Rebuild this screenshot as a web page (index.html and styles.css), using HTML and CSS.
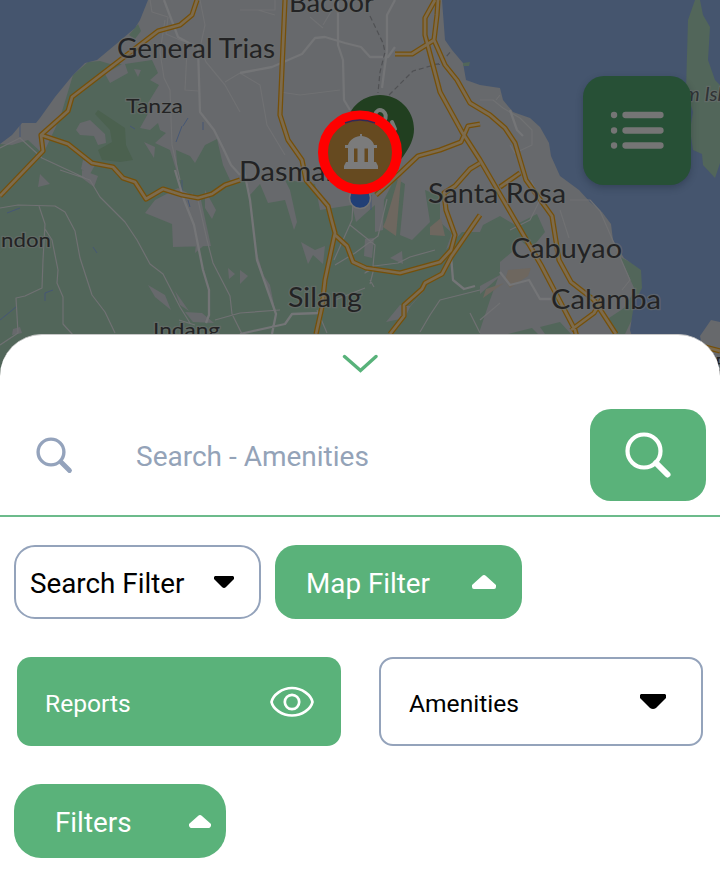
FILE: index.html
```html
<!DOCTYPE html>
<html lang="en">
<head>
<meta charset="utf-8">
<meta name="viewport" content="width=device-width, initial-scale=1">
<title>Map search</title>
<link rel="stylesheet" href="styles.css">
</head>
<body>
<main class="screen">
  <section class="map">
    <svg class="map-art" viewBox="0 0 720 390" width="720" height="390">
      <rect class="urban" width="720" height="390"/>
      <!-- countryside -->
      <path class="green" d="M88 62L100 61 110 64 122 64 105 74 110 83 128 73 125 64 152 60 158 73 150 80 159 85 148 103 150 110 140 128 150 130 158 123 160 130 166 133 155 143 170 150 178 176 176 150 190 156 195 163 205 145 217 139 223 165 230 180 247 180 250 195 260 184 268 203 285 200 294 230 297 222 290 190 285 180 302 182 315 184 320 210 352 205 356 222 375 205 375 232 383 230 384 200 395 178 405 184 400 235 412 240 430 222 425 190 440 196 440 222 452 233 446 250 462 232 480 232 483 225 500 216 515 225 537 214 545 232 531 249 520 240 512 252 500 262 500 275 480 286 480 334 490 390H0V144L12 145 28 140 42 153 45 150 60 118 73 75Z"/>
      <path class="green" d="M138 24L141 31 135 39 129 35ZM480 294L498 278 490 300 480 330ZM508 334L532 328 538 334ZM540 327L560 322 571 334H545ZM620 257L642 268 643 288 634 300 635 313 625 334H614L609 318 624 308 635 290Z"/>
      <path class="forest" d="M98 110L125 128 126 145 133 160 120 162 102 160 98 150 112 142 110 130 95 114Z"/>
      <!-- settled patches -->
      <path class="urban" d="M80 123L90 120 105 134 106 143 98 145 94 136 80 135 76 130ZM134 69L141 70 138 77ZM144 142L155 147 154 158ZM40 174L50 184 38 187ZM83 160L95 165 90 174 81 169ZM82 170L98 176 94 187 82 178ZM155 200L178 188 201 200 211 246 173 247 172 224 145 213ZM192 192L199 220 202 225 208 242 195 253 198 225 188 215ZM148 285L165 295 171 310 155 297ZM175 291L189 311 180 305ZM185 312L202 313 214 323 193 322ZM301 242L315 250 325 246 323 264 313 255 308 264ZM365 239L374 238 372 258 364 256ZM402 251L403 264 390 258ZM386 322L400 305 410 306 429 285 410 307 405 318ZM228 268L235 274 229 279ZM240 270L248 276 240 284ZM256 250L260 270 270 285 275 310 265 280ZM13 329L20 327 22 333 12 335ZM205 190L216 210 212 219 205 208Z"/>
      <path class="sand" d="M403 162L386 220 383 227 396 236 400 190ZM441 218L430 227 430 235 445 236ZM508 270L531 268 528 276 510 288 505 280ZM486 289L504 283 483 298Z"/>
      <!-- water -->
      <path class="water" d="M0 0H148L140 20 135 28 115 45 97 60 85 63 73 75 55 97 40 118 36 123 22 123 12 135 0 144ZM442 0L445 40 452 50 463 63 466 80 480 85 500 88 503 100 513 112 530 118 540 127 549 143 551 156 560 176 579 190 590 202 602 212 611 224 613 240 624 258 641 270 642 288 634 304 630 330 635 346 720 356V0Z"/>
      <path class="urban" d="M700 336L711 320 720 322V380L704 355Z"/>
      <path class="green" d="M695 0H700L703 15 710 27 708 60 715 80 720 85V163L715 178 703 165 702 154 693 150 690 130 693 112 686 90 688 20ZM463 63L470 62 469 66 463 66Z"/>
      <!-- streams -->
      <path class="stream" d="M20 137V123M182 180V193M188 200L190 207M176 142L182 126M203 122V130M188 118L183 126M130 126L135 129M7 213L20 208M93 247L97 253M45 301V293L53 290M0 320L16 307M371 210V195"/>
      <!-- minor roads -->
      <g class="minor">
        <path d="M0 148L20 138 42 158 85 178M0 208L18 205 55 206 65 212 75 231 80 258 92 295 105 312 115 333M39 206L45 224 43 260 42 288 25 296 16 298 18 333 0 345M45 229L52 240 58 270 57 283 63 297 63 324 73 335M60 170L90 180 100 197 125 222 137 240 150 264 163 274 180 307 190 323M150 0L152 12 168 17 166 34 180 40 200 47 206 62 225 85 240 112M200 0L205 25 200 48M165 20L160 52 164 78 170 90 172 145 180 180M187 50L185 90 198 91M240 73L225 82M240 73L260 85 267 125 285 155M256 10H275V0M240 10H258L275 15M310 17L323 28M280 92L300 95 340 90M350 147L355 165 352 220 334 260M338 0L323 25M350 225L375 245 373 266M387 199L378 236 355 253 335 265M370 284L374 268 365 273 374 266 398 263 410 257 435 250M374 287L370 280M480 100L493 100 503 108 520 118 532 130 532 145 515 153 510 145M496 100L500 95M570 200L590 200 600 211 630 280 622 290M480 320L500 303M531 180L540 200 530 220 510 230M560 210L569 238M240 313L280 310M317 310L327 333M335 300L365 288M420 332L430 315 440 300 480 290M470 313L480 333M198 200L207 240 213 263 230 296 232 314 245 340M215 320L240 313M179 320L195 325"/>
        <path class="broad" d="M164 0L178 37 198 48 200 112 214 130 223 148 231 165 240 175M175 170L184 200 194 225 203 270 209 290 209 315 206 323M240 73L272 67 302 54 315 38 325 37 345 43 361 47 370 57H388L395 47M338 0V45L343 60 344 100 350 110M395 0L387 15V50L382 88M244 170L250 200 257 260 276 314 272 334M240 334L285 324 292 314 320 313M510 110L517 130 523 136M500 272L510 285 529 280 540 299 551 299M451 256L453 280 464 289 475 286"/>
      </g>
      <path class="rail" d="M370 16L383 43 385 52 380 72 378 93M389 95L413 71 441 63 451 51M435 64L445 65"/>
      <!-- highways -->
      <g class="road-edge">
        <path d="M197 0L192 15 180 25 158 31 72 97 68 111 41 135 43 151 0 196M41 135L68 144 92 163 113 167 123 178 135 182 146 199 163 189 182 195 198 198 212 194 225 185 240 180M285 0L280 115 288 140 302 160 306 180 328 206 331 218 335 233 325 280 322 307 316 334M334 234L347 246 353 262 366 268 400 273 440 262 451 250 455 235 446 210 444 193 455 186 470 169 480 163"/>
        <path d="M435 0L425 18V35L440 92 462 132 480 160 541 265 575 330 579 345M438 0L437 15 434 40 445 65 457 80 470 103 490 115 505 128 515 143 526 180 552 216 559 260 571 282 594 300 616 334M395 54H412L434 40M520 173L500 187M376 195L400 173 418 156 440 150 461 142 468 126 480 124M480 215L451 257 442 274 425 283 422 289 404 305 404 316 390 334M571 330L594 313 602 299M690 343L720 351"/>
      </g>
      <g class="road-fill">
        <path d="M197 0L192 15 180 25 158 31 72 97 68 111 41 135 43 151 0 196M41 135L68 144 92 163 113 167 123 178 135 182 146 199 163 189 182 195 198 198 212 194 225 185 240 180M285 0L280 115 288 140 302 160 306 180 328 206 331 218 335 233 325 280 322 307 316 334M334 234L347 246 353 262 366 268 400 273 440 262 451 250 455 235 446 210 444 193 455 186 470 169 480 163"/>
        <path d="M435 0L425 18V35L440 92 462 132 480 160 541 265 575 330 579 345M438 0L437 15 434 40 445 65 457 80 470 103 490 115 505 128 515 143 526 180 552 216 559 260 571 282 594 300 616 334M395 54H412L434 40M520 173L500 187M376 195L400 173 418 156 440 150 461 142 468 126 480 124M480 215L451 257 442 274 425 283 422 289 404 305 404 316 390 334M571 330L594 313 602 299M690 343L720 351"/>
      </g>
      <!-- place names -->
      <g class="place large">
        <text x="289" y="12" textLength="85" lengthAdjust="spacingAndGlyphs">Bacoor</text>
        <text x="117" y="58" textLength="158" lengthAdjust="spacingAndGlyphs">General Trias</text>
        <text x="239" y="181" textLength="147" lengthAdjust="spacingAndGlyphs">Dasmariñas</text>
        <text x="428" y="203" textLength="138" lengthAdjust="spacingAndGlyphs">Santa Rosa</text>
        <text x="511" y="258" textLength="111" lengthAdjust="spacingAndGlyphs">Cabuyao</text>
        <text x="551" y="309" textLength="110" lengthAdjust="spacingAndGlyphs">Calamba</text>
        <text x="288" y="307" textLength="74" lengthAdjust="spacingAndGlyphs">Silang</text>
      </g>
      <g class="place small">
        <text x="126" y="113" textLength="57" lengthAdjust="spacingAndGlyphs">Tanza</text>
        <text x="1" y="247" textLength="50" lengthAdjust="spacingAndGlyphs">ndon</text>
        <text x="153" y="337" textLength="67" lengthAdjust="spacingAndGlyphs">Indang</text>
        <text class="island" x="684" y="101">m Island</text>
        <text x="715" y="371">B</text>
      </g>
      <!-- markers -->
      <circle class="location" cx="360" cy="198" r="10.5"/>
      <path class="pin" d="M380 95C399 95 414 110 414 129C414 149 397 161 380 190C363 161 346 149 346 129C346 110 361 95 380 95Z"/>
      <path class="pin-symbol" d="M375 115Q377 108 383 111Q388 115 384 121M392 122L395 129M384 121L389 125"/>
      <circle class="marker" cx="360" cy="152.500" r="37"/>
      <path class="marker-shade" d="M345 123Q360 117 375 123"/>
      <path class="landmark" fill-rule="evenodd" d="M360 134h2v2c7 1 11 5 12 9h3v3h-3v14h2l2 4v3h-34v-3l2-4h2v-14h-3v-3h3c1-4 5-8 12-9zM354 148.500v13.500h3.500v-13.500zM364.500 148.500v13.500h3.500v-13.500z"/>
    </svg>
    <button class="list-button" aria-label="List">
      <svg viewBox="0 0 54 40" width="54" height="40"><path d="M4 4h.1M4 19.500h.1M4 34.500h.1M15.500 4h35M15.500 19.500h35M15.500 34.500h35"/></svg>
    </button>
  </section>

  <section class="sheet">
    <button class="collapse" aria-label="Collapse">
      <svg viewBox="0 0 36 20" width="36" height="20"><path d="M2.500 2.500L18.500 16.500 34 2.500"/></svg>
    </button>
    <form class="search-row">
      <svg class="search-hint" viewBox="0 0 38 38" width="38" height="38"><circle cx="16" cy="16" r="12.900"/><path d="M26 26L34.500 34.500"/></svg>
      <span class="query">Search - Amenities</span>
      <button class="search-button" type="button" aria-label="Search">
        <svg viewBox="0 0 48 48" width="48" height="48"><circle cx="20" cy="20" r="16.500"/><path d="M32 32L43.500 43.500"/></svg>
      </button>
    </form>
    <div class="filters">
      <button class="chip outline search-filter"><span>Search Filter</span><svg viewBox="0 0 20 12" width="20" height="12"><path d="M1 0H19L20 1V3L12 11Q10 13 8 11L0 3V1Z"/></svg></button>
      <button class="chip solid map-filter"><span>Map Filter</span><svg viewBox="0 0 24 14" width="24" height="14"><path d="M0 10L10 1Q12-1 14 1L24 10V12Q24 14 22 14H2Q0 14 0 12Z"/></svg></button>
    </div>
    <div class="layers">
      <button class="tile solid"><span>Reports</span><svg class="eye" viewBox="0 0 44 32" width="44" height="32"><path d="M1.500 16C3 9 12 2 22 2S41 9 42.500 16C41 23 32 29.500 22 29.500S3 23 1.500 16Z"/><circle cx="22" cy="16" r="7.200"/></svg></button>
      <button class="tile outline"><span>Amenities</span><svg class="tile-caret" viewBox="0 0 26 15" width="26" height="15"><path d="M1 0H25L26 1V4L16 14Q13 16 10 14L0 4V1Z"/></svg></button>
    </div>
    <button class="chip solid all-filters"><span>Filters</span><svg viewBox="0 0 22 13" width="22" height="13"><path d="M0 9L9 1Q11-1 13 1L22 9V11Q21 13 20 13H2Q1 13 0 11Z"/></svg></button>
  </section>
</main>
</body>
</html>
```
FILE: styles.css
```css
* { box-sizing: border-box; }
body { margin: 0; font-family: Roboto, "Liberation Sans", sans-serif; background: #fff; }
button { border: 0; margin: 0; padding: 0; font: inherit; background: none; }
svg { display: block; flex: none; }

.screen { width: 720px; height: 888px; overflow: hidden; }
.map { position: relative; height: 390px; overflow: hidden; }
.water { fill: #45556e; }
.urban { fill: #67696c; }
.green { fill: #52665a; }
.forest { fill: #4b614f; }
.sand { fill: #6e675f; }
.stream { fill: none; stroke: #465775; stroke-width: 1; }
.minor { fill: none; stroke: #707173; stroke-width: 1.2; stroke-linejoin: round; }
.broad { stroke: #747577; stroke-width: 2.3; }
.rail { fill: none; stroke: #505154; stroke-width: 1.2; stroke-dasharray: 5 3; }
.road-edge, .road-fill { fill: none; stroke-linejoin: round; }
.road-edge { stroke: #765009; stroke-width: 5.2; }
.road-fill { stroke: #7c6b4e; stroke-width: 2.7; }
.place { font-family: Lato, "Open Sans", sans-serif; fill: #232324; stroke: #6b6e6e; stroke-width: 2.5; stroke-opacity: .65; paint-order: stroke; }
.large { font-size: 26px; }
.small { font-size: 20px; }
.island { font-style: italic; fill: #303335; }
.location { fill: #213f76; stroke: #747474; stroke-width: 1.5; }
.pin { fill: #213f20; }
.pin-symbol { fill: none; stroke: #777b77; stroke-width: 4; stroke-linecap: round; }
.marker { fill: #664a20; stroke: #f00; stroke-width: 10; }
.marker-shade { fill: none; stroke: #302b55; stroke-width: 1.5; }
.landmark { fill: #7b7b7b; }
.list-button { position: absolute; left: 583px; top: 76px; width: 108px; height: 109px; border-radius: 21px; background: #275036; display: flex; align-items: center; justify-content: center; box-shadow: 0 3px 7px rgba(20, 30, 45, .3); }
.list-button path { fill: none; stroke: #757575; stroke-width: 6.3; stroke-linecap: round; }

.sheet { position: relative; height: 554px; margin-top: -56px; border-radius: 42px 42px 0 0; background: #fff; border-top: 1px solid #c7c7c7; }
.collapse { display: block; margin: 0 auto; padding-top: 19px; }
.collapse path { fill: none; stroke: #58b27a; stroke-width: 3.4; stroke-linecap: round; }
.search-row { display: flex; align-items: center; height: 109px; margin-top: 34px; padding: 1px 14px 14px 35px; border-bottom: 2px solid #6cbb8b; }
.search-hint { fill: none; stroke: #94a3bc; stroke-width: 3.4; stroke-linecap: round; }
.search-hint path { stroke-width: 4.8; }
.query { flex: 1; margin-left: 63px; padding-top: 3px; font-size: 28px; color: #94a3b8; }
.search-button { width: 116px; height: 92px; border-radius: 21px; background: #5ab27a; display: grid; place-items: center; }
.search-button svg { fill: none; stroke: #fff; stroke-width: 4.2; stroke-linecap: round; }
.search-button path { stroke-width: 6; }
.filters { display: flex; gap: 14px; padding: 28px 14px 0; }
.chip { display: flex; align-items: center; justify-content: space-between; height: 74px; border-radius: 21px; font-size: 27.8px; }
.chip span { padding-top: 2px; }
.solid { background: #5ab27a; color: #fff; fill: #fff; }
.outline { background: #fff; color: #000; fill: #000; border: 2px solid #94a3bb; }
.search-filter { width: 247px; padding: 0 25px 0 14px; }
.map-filter { width: 247px; padding: 0 26px 0 31px; }
.layers { display: flex; gap: 38px; padding: 38px 17px; }
.tile { display: flex; align-items: center; justify-content: space-between; width: 324px; height: 89px; border-radius: 14px; font-size: 24.6px; }
.tile span { padding-top: 3px; }
.tile.solid { padding: 0 27px 0 28px; }
.tile.outline { padding: 0 35px 0 28px; }
.eye { fill: none; stroke: #fff; stroke-width: 2.7; }
.all-filters { width: 212px; margin-left: 14px; padding: 0 15px 0 41px; border-radius: 27px; }
```
